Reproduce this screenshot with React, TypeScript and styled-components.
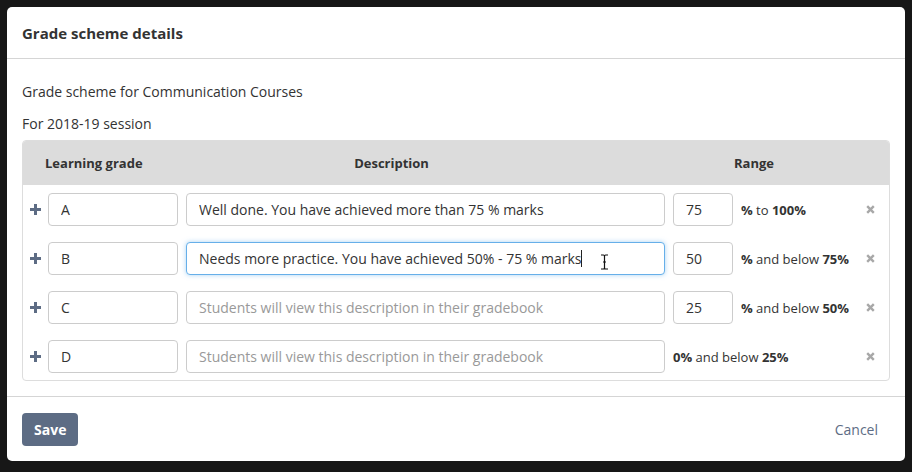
import React from "react";
import styled, { createGlobalStyle } from "styled-components";

const Global = createGlobalStyle`
  html, body { margin: 0; padding: 0; background: #171717; }
  body { font-family: "Open Sans", "Liberation Sans", sans-serif; color: #333; }
  * { box-sizing: border-box; }
`;

const Backdrop = styled.div`
  width: 912px;
  height: 472px;
  padding: 7px 7px 0 7px;
  background: #171717;
`;

const Modal = styled.div`
  position: relative;
  width: 898px;
  height: 454px;
  background: #fff;
  border-radius: 5px;
  display: flex;
  flex-direction: column;
`;

const Header = styled.div`
  height: 52px;
  padding: 0 15px;
  display: flex;
  align-items: center;
  border-bottom: 1px solid #d5d5d5;
`;

const Title = styled.h1`
  margin: 0;
  font-size: 15px;
  font-weight: 700;
  color: #333;
`;

const Body = styled.div`
  padding: 23px 15px 15px 15px;
  border-bottom: 1px solid #d5d5d5;
`;

const Line = styled.p`
  margin: 0 0 13px 0;
  font-size: 14px;
  line-height: 19px;
  color: #333;
  &:last-of-type { margin-bottom: 0; }
`;

const TableBox = styled.div`
  margin-top: 7px;
  border: 1px solid #ddd;
  border-radius: 4px;
  overflow: hidden;
`;

const HeadRow = styled.div`
  height: 44px;
  background: #dcdcdc;
  display: grid;
  grid-template-columns: 160px 417px 1fr;
  align-items: center;
  font-size: 13px;
  font-weight: 700;
  color: #333;
`;

const HeadCell = styled.div<{ $align: "left" | "center"; $pl?: number }>`
  text-align: ${(p) => p.$align};
  padding-left: ${(p) => p.$pl ?? 0}px;
`;

const Rows = styled.div`
  display: flex;
  flex-direction: column;
  gap: 16px;
  padding: 8px 0 7px 0;
`;

const Row = styled.div`
  display: flex;
  align-items: center;
  gap: 8px;
  height: 33px;
`;

const PlusCell = styled.div`
  flex: none;
  width: 25px;
  margin-right: -8px;
  display: flex;
  align-items: center;
  justify-content: center;
`;

const RemoveCell = styled.div`
  flex: none;
  width: 38px;
  display: flex;
  align-items: center;
  justify-content: center;
`;

const Field = styled.input<{ $focus?: boolean; $w: number }>`
  height: 33px;
  width: ${(p) => p.$w}px;
  flex: none;
  padding: 0 12px;
  border: 1px solid ${(p) => (p.$focus ? "#66afe9" : "#ccc")};
  border-radius: 4px;
  font-family: "Open Sans", "Liberation Sans", sans-serif;
  font-size: 14px;
  color: #333;
  background: #fff;
  box-shadow: ${(p) => (p.$focus ? "0 0 5px rgba(102,175,233,0.55)" : "none")};
  outline: none;
  &::placeholder { color: #999; }
`;

const FieldWrap = styled.div`
  position: relative;
  flex: none;
  display: flex;
`;

const Caret = styled.span`
  position: absolute;
  left: 395px;
  top: 8px;
  width: 1px;
  height: 17px;
  background: #222;
`;

const RangeText = styled.div`
  flex: 1;
  min-width: 0;
  font-size: 13px;
  color: #333;
  white-space: nowrap;
  b { font-weight: 700; }
`;

const Footer = styled.div`
  flex: 1;
  display: flex;
  align-items: flex-start;
  justify-content: space-between;
  padding: 16px 27px 0 15px;
`;

const SaveButton = styled.button`
  height: 33px;
  padding: 0 12px;
  border: none;
  border-radius: 4px;
  background: #5d6c84;
  color: #fff;
  font-family: "Open Sans", "Liberation Sans", sans-serif;
  font-size: 14px;
  font-weight: 700;
`;

const CancelLink = styled.span`
  margin-top: 7px;
  font-size: 14px;
  color: #5d6c84;
`;

const Cursor = styled.svg`
  position: absolute;
  left: 593px;
  top: 247px;
`;

const Plus = () => (
  <svg width="11" height="11" viewBox="0 0 11 11">
    <rect x="4" y="0" width="3" height="11" fill="#5d6c84" />
    <rect x="0" y="4" width="11" height="3" fill="#5d6c84" />
  </svg>
);

const Cross = () => (
  <svg width="9" height="9" viewBox="0 0 9 9">
    <path d="M1.2 1.2 L7.8 7.8 M7.8 1.2 L1.2 7.8" stroke="#a8a8a8" strokeWidth="2.4" strokeLinecap="butt" />
  </svg>
);

type Grade = {
  grade: string;
  desc: string;
  min?: string;
  range: React.ReactNode;
  focus?: boolean;
};

const grades: Grade[] = [
  {
    grade: "A",
    desc: "Well done. You have achieved more than 75 % marks",
    min: "75",
    range: (
      <>
        <b>%</b> to <b>100%</b>
      </>
    ),
  },
  {
    grade: "B",
    desc: "Needs more practice. You have achieved 50% - 75 % marks",
    min: "50",
    focus: true,
    range: (
      <>
        <b>%</b> and below <b>75%</b>
      </>
    ),
  },
  {
    grade: "C",
    desc: "",
    min: "25",
    range: (
      <>
        <b>%</b> and below <b>50%</b>
      </>
    ),
  },
  {
    grade: "D",
    desc: "",
    range: (
      <>
        <b>0%</b> and below <b>25%</b>
      </>
    ),
  },
];

export default function App() {
  return (
    <>
      <Global />
      <Backdrop>
        <Modal>
          <Header>
            <Title>Grade scheme details</Title>
          </Header>
          <Body>
            <Line>Grade scheme for Communication Courses</Line>
            <Line>For 2018-19 session</Line>
            <TableBox>
              <HeadRow>
                <HeadCell $align="left" $pl={22}>Learning grade</HeadCell>
                <HeadCell $align="center">Description</HeadCell>
                <HeadCell $align="center" $pl={19}>Range</HeadCell>
              </HeadRow>
              <Rows>
                {grades.map((g) => (
                  <Row key={g.grade}>
                    <PlusCell>
                      <Plus />
                    </PlusCell>
                    <Field $w={130} defaultValue={g.grade} readOnly />
                    <FieldWrap>
                      <Field
                        $w={479}
                        $focus={g.focus}
                        defaultValue={g.desc}
                        placeholder="Students will view this description in their gradebook"
                        readOnly
                      />
                      {g.focus && <Caret />}
                    </FieldWrap>
                    {g.min !== undefined && <Field $w={60} defaultValue={g.min} readOnly />}
                    <RangeText>{g.range}</RangeText>
                    <RemoveCell>
                      <Cross />
                    </RemoveCell>
                  </Row>
                ))}
              </Rows>
            </TableBox>
          </Body>
          <Footer>
            <SaveButton>Save</SaveButton>
            <CancelLink>Cancel</CancelLink>
          </Footer>
          <Cursor width="9" height="16" viewBox="0 0 9 16">
            <path d="M1 1 H3.5 Q4.5 1 4.5 2.5 Q4.5 1 5.5 1 H8 M4.5 2.5 V13.5 M1 15 H3.5 Q4.5 15 4.5 13.5 Q4.5 15 5.5 15 H8 M3 8 H6" stroke="#111" strokeWidth="1.2" fill="none" />
          </Cursor>
        </Modal>
      </Backdrop>
    </>
  );
}
